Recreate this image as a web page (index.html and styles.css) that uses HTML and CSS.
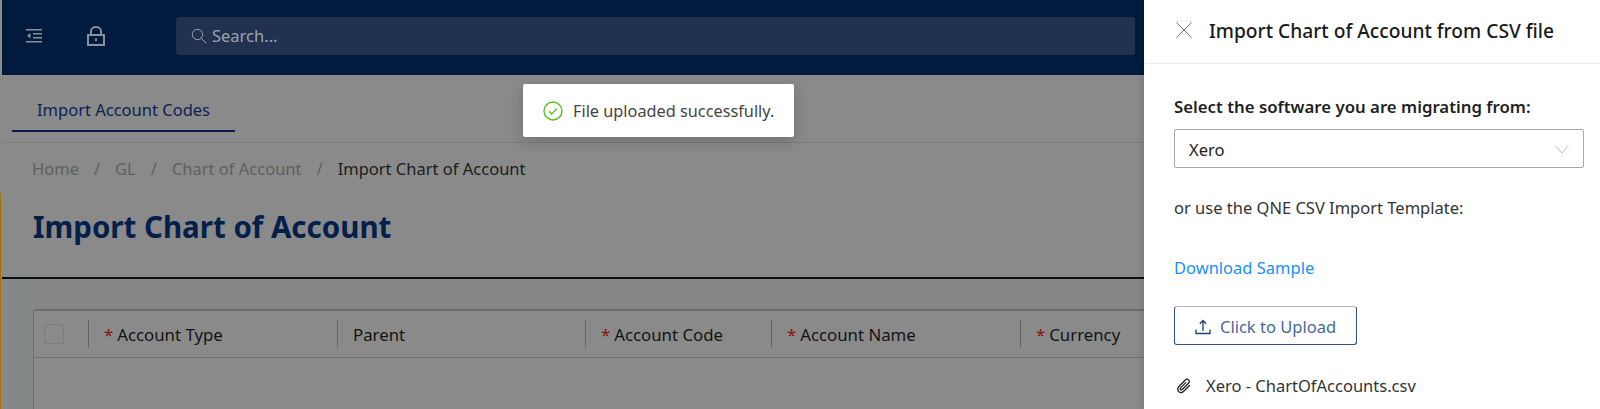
FILE: index.html
```html
<!DOCTYPE html>
<html lang="en">
<head>
  <meta charset="UTF-8" />
  <title>Import Chart of Account</title>
  <link rel="stylesheet" href="styles.css">
</head>
<body>
  <div class="edge-strip"></div>

  <div class="main">
    <header class="topbar">
      <svg class="menu-icon" viewBox="0 0 16 14" width="16" height="14">
        <path d="M0 .75h16M7 4.750h9M7 8.750h9M0 12.750h16" />
        <path class="solid" d="M4.500 4v5.500L1 6.750z" />
      </svg>
      <svg class="lock-icon" viewBox="0 0 18 20" width="18" height="20">
        <rect x="1" y="9" width="16" height="10" />
        <path d="M4 9V5a5 4 0 0 1 10 0v4" />
        <path class="solid" d="M8 12.500h2v2.500H8z" />
      </svg>
      <div class="search">
        <svg viewBox="0 0 16 16" width="16" height="16">
          <circle cx="6.500" cy="6.500" r="5.200" />
          <path d="M10.300 10.300l5 5" />
        </svg>
        <span>Search...</span>
      </div>
    </header>

    <nav class="tabs">
      <a class="tab">Import Account Codes</a>
    </nav>

    <div class="crumbs">
      <span>Home</span><i>/</i><span>GL</span><i>/</i><span>Chart of Account</span><i>/</i><b>Import Chart of Account</b>
    </div>

    <h1 class="page-title">Import Chart of Account</h1>

    <div class="table-wrap">
      <div class="table">
        <div class="table-head">
          <div class="cell cell-check"><div class="checkbox"></div></div>
          <div class="cell cell-type"><em>*</em>Account Type</div>
          <div class="cell cell-parent">Parent</div>
          <div class="cell cell-code"><em>*</em>Account Code</div>
          <div class="cell cell-name"><em>*</em>Account Name</div>
          <div class="cell cell-currency"><em>*</em>Currency</div>
        </div>
      </div>
    </div>
  </div>

  <aside class="drawer">
    <div class="drawer-head">
      <svg class="close-icon" viewBox="0 0 16 16" width="16" height="16">
        <path d="M.5.5l15 15M15.500.5l-15 15" />
      </svg>
      <h2>Import Chart of Account from CSV file</h2>
    </div>
    <div class="drawer-body">
      <label class="field-label">Select the software you are migrating from:</label>
      <div class="select">
        <span>Xero</span>
        <svg viewBox="0 0 14 9" width="14" height="9">
          <path d="M.5.800L7 8l6.500-7.200" />
        </svg>
      </div>
      <p class="hint">or use the QNE CSV Import Template:</p>
      <a class="sample-link">Download Sample</a>
      <button class="upload-btn">
        <svg viewBox="0 0 16 16" width="16" height="16">
          <path d="M8 12V2M4.800 4.800L8 1.500l3.200 3.300M1 10.500V14.500H15V10.500" />
        </svg>
        Click to Upload
      </button>
      <div class="file-row">
        <svg viewBox="0 0 16 16" width="16" height="16">
          <path d="M13.800 7.200L8 13c-1.700 1.700-4 1.900-5.300.6S1.400 10 3.100 8.300l6-6c1.200-1.200 2.700-1.300 3.600-.4s.8 2.400-.4 3.600L6.500 11.300c-.7.700-1.500.8-2 .3s-.4-1.300.3-2L10 4.400" />
        </svg>
        <span>Xero - ChartOfAccounts.csv</span>
      </div>
    </div>
  </aside>

  <div class="toast">
    <svg viewBox="0 0 20 20" width="20" height="20">
      <circle cx="10" cy="10" r="9" />
      <path d="M6 10.300l2.800 2.800L14 7.400" />
    </svg>
    <span>File uploaded successfully.</span>
  </div>
</body>
</html>
```

FILE: styles.css
```css
* {
  box-sizing: border-box;
}

body {
  display: flex;
  margin: 0;
  height: 409px;
  overflow: hidden;
  background: #8a8a8a;
  font-family: 'Noto Sans', sans-serif;
  font-size: 16.500px;
  color: #111;
}

svg {
  fill: none;
  stroke: currentColor;
  flex-shrink: 0;
}

svg .solid {
  fill: currentColor;
  stroke: none;
}

.edge-strip {
  width: 2px;
  flex-shrink: 0;
  background: linear-gradient(#9a7410, #9a7410) 0 193px / 1px 100% no-repeat, #8a8a8a;
}

.main {
  width: 1142px;
  flex-shrink: 0;
}

.topbar {
  display: flex;
  align-items: center;
  height: 75px;
  padding: 0 9px 4px 24px;
  background: #011b3e;
  color: #8a8f98;
}

.menu-icon {
  stroke-width: 1.500;
}

.lock-icon {
  margin-left: 45px;
  stroke-width: 2;
}

.search {
  display: flex;
  align-items: center;
  gap: 5px;
  flex: 1;
  height: 38px;
  margin-left: 71px;
  padding: 0 15px;
  border-radius: 3px;
  background: #20324f;
  color: #9ba3af;
}

.tabs {
  height: 68px;
  padding: 7px 0 0 10px;
  border-bottom: 1px solid #7d7d7d;
}

.tab {
  display: block;
  width: 223px;
  height: 50px;
  padding: 16px 0 0 25px;
  border-bottom: 2px solid #0a1a4e;
  color: #0b1f52;
}

.crumbs {
  display: flex;
  align-items: center;
  height: 53px;
  padding: 0 0 2px 30px;
  color: #5f5f5f;
}

.crumbs i {
  margin: 0 15px;
  font-style: normal;
}

.crumbs b {
  font-weight: 400;
  color: #1c1c1c;
}

.page-title {
  height: 83px;
  margin: 0;
  padding: 11px 0 0 31px;
  border-bottom: 2px solid #0c0c0c;
  font-size: 29.500px;
  font-weight: 700;
  line-height: 40px;
  color: #04204a;
}

.table-wrap {
  padding: 30px 0 0 31px;
  background: #858789;
}

.table {
  height: 100px;
  border: solid #6e6e6e;
  border-width: 2px 0 0 1px;
  border-top-left-radius: 3px;
  background: #8a8a8a;
}

.table-head {
  display: flex;
  align-items: center;
  height: 47px;
  border-bottom: 1px solid #6e6e6e;
}

.cell {
  display: flex;
  align-items: center;
  height: 28px;
  padding-left: 15px;
  border-left: 1px solid #666;
  font-size: 16.800px;
  white-space: nowrap;
  color: #141414;
}

.cell em {
  margin-right: 4px;
  font-style: normal;
  color: #8b1010;
}

.cell-check {
  width: 54px;
  padding-left: 10px;
  border-left: none;
}

.cell-type {
  width: 249px;
}

.cell-parent {
  width: 248px;
}

.cell-code {
  width: 186px;
}

.cell-name {
  width: 249px;
}

.cell-currency {
  flex: 1;
}

.checkbox {
  width: 20px;
  height: 20px;
  border: 1px solid #7c7c7c;
  border-radius: 2px;
}

.drawer {
  flex: 1;
  background: #fff;
  box-shadow: -3px 0 6px rgba(0, 0, 0, 0.1);
}

.drawer-head {
  display: flex;
  align-items: center;
  gap: 17px;
  height: 64px;
  padding: 0 0 2px 32px;
  border-bottom: 1px solid #eee;
}

.close-icon {
  margin-top: -2px;
  color: #777;
}

.drawer-head h2 {
  margin: 0;
  font-size: 19.200px;
  font-weight: 500;
  color: #1a1a1a;
}

.drawer-body {
  padding: 31px 16px 0 30px;
}

.field-label {
  display: block;
  height: 34px;
  font-size: 16.800px;
  line-height: 24px;
  font-weight: 600;
  color: #1f1f1f;
}

.select {
  display: flex;
  align-items: center;
  justify-content: space-between;
  height: 39px;
  padding: 2px 14px 0 14px;
  border: 1px solid #a9a9a9;
  border-radius: 2px;
  color: #222;
}

.select svg {
  color: #bbb;
}

.hint {
  margin: 28px 0 0;
  line-height: 24px;
  color: #333;
}

.sample-link {
  display: block;
  margin-top: 36px;
  line-height: 24px;
  color: #1890ff;
}

.upload-btn {
  display: flex;
  align-items: center;
  gap: 9px;
  width: 183px;
  height: 39px;
  margin-top: 26px;
  padding: 2px 0 0 20px;
  border: 1px solid #2f5288;
  border-top-color: #aeb7c7;
  border-radius: 3px;
  background: #fff;
  font: inherit;
  color: #466a9c;
}

.upload-btn svg {
  color: #1c3f78;
  stroke-width: 1.300;
}

.file-row {
  display: flex;
  align-items: center;
  gap: 14px;
  margin-top: 29px;
  padding-left: 2px;
  line-height: 24px;
  color: #333;
}

.file-row svg {
  color: #222;
  stroke-width: 1.300;
}

.toast {
  position: absolute;
  top: 84px;
  left: 523px;
  display: flex;
  align-items: center;
  gap: 10px;
  width: 271px;
  height: 53px;
  padding-left: 20px;
  border-radius: 2px;
  background: #fff;
  box-shadow: 0 4px 16px rgba(0, 0, 0, 0.2);
  font-size: 16.300px;
  color: #444;
}

.toast svg {
  color: #52c41a;
  stroke-width: 1.400;
}
```
